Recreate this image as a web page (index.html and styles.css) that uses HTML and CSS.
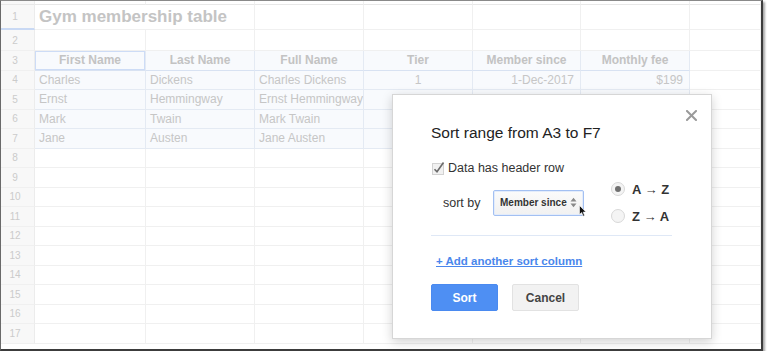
FILE: index.html
```html
<!DOCTYPE html>
<html>
<head>
<meta charset="utf-8">
<link rel="stylesheet" href="styles.css">
</head>
<body>
<div class="frame">
  <div class="sheet">
    <div class="c rh top"></div><div class="c top"></div><div class="c top"></div><div class="c top"></div><div class="c top"></div><div class="c top"></div><div class="c top"></div><div class="c top"></div>

    <div class="c rh rh1">1</div><div class="c title">Gym membership table</div><div class="c"></div><div class="c"></div><div class="c"></div><div class="c"></div><div class="c"></div>

    <div class="c rh">2</div><div class="c"></div><div class="c"></div><div class="c"></div><div class="c"></div><div class="c"></div><div class="c"></div><div class="c"></div>

    <div class="c rh">3</div><div class="c t h sel">First Name</div><div class="c t h">Last Name</div><div class="c t h">Full Name</div><div class="c t h">Tier</div><div class="c t h">Member since</div><div class="c t h">Monthly fee</div><div class="c"></div>

    <div class="c rh">4</div><div class="c t">Charles</div><div class="c t">Dickens</div><div class="c t">Charles Dickens</div><div class="c t ctr">1</div><div class="c t rt">1-Dec-2017</div><div class="c t rt">$199</div><div class="c"></div>

    <div class="c rh">5</div><div class="c t">Ernst</div><div class="c t">Hemmingway</div><div class="c t">Ernst Hemmingway</div><div class="c t"></div><div class="c t"></div><div class="c t"></div><div class="c"></div>

    <div class="c rh">6</div><div class="c t">Mark</div><div class="c t">Twain</div><div class="c t">Mark Twain</div><div class="c t"></div><div class="c t"></div><div class="c t"></div><div class="c"></div>

    <div class="c rh">7</div><div class="c t">Jane</div><div class="c t">Austen</div><div class="c t">Jane Austen</div><div class="c t"></div><div class="c t"></div><div class="c t"></div><div class="c"></div>

    <div class="c rh">8</div><div class="c"></div><div class="c"></div><div class="c"></div><div class="c"></div><div class="c"></div><div class="c"></div><div class="c"></div>
    <div class="c rh">9</div><div class="c"></div><div class="c"></div><div class="c"></div><div class="c"></div><div class="c"></div><div class="c"></div><div class="c"></div>
    <div class="c rh">10</div><div class="c"></div><div class="c"></div><div class="c"></div><div class="c"></div><div class="c"></div><div class="c"></div><div class="c"></div>
    <div class="c rh">11</div><div class="c"></div><div class="c"></div><div class="c"></div><div class="c"></div><div class="c"></div><div class="c"></div><div class="c"></div>
    <div class="c rh">12</div><div class="c"></div><div class="c"></div><div class="c"></div><div class="c"></div><div class="c"></div><div class="c"></div><div class="c"></div>
    <div class="c rh">13</div><div class="c"></div><div class="c"></div><div class="c"></div><div class="c"></div><div class="c"></div><div class="c"></div><div class="c"></div>
    <div class="c rh">14</div><div class="c"></div><div class="c"></div><div class="c"></div><div class="c"></div><div class="c"></div><div class="c"></div><div class="c"></div>
    <div class="c rh">15</div><div class="c"></div><div class="c"></div><div class="c"></div><div class="c"></div><div class="c"></div><div class="c"></div><div class="c"></div>
    <div class="c rh">16</div><div class="c"></div><div class="c"></div><div class="c"></div><div class="c"></div><div class="c"></div><div class="c"></div><div class="c"></div>
    <div class="c rh">17</div><div class="c"></div><div class="c"></div><div class="c"></div><div class="c"></div><div class="c"></div><div class="c"></div><div class="c"></div>
  </div>

  <div class="dialog">
    <svg class="close" width="11" height="11" viewBox="0 0 11 11"><path d="M1 1L10 10M10 1L1 10" stroke="#9a9a9a" stroke-width="2" stroke-linecap="square"/></svg>
    <div class="dtitle">Sort range from A3 to F7</div>
    <div class="checkrow">
      <svg class="cbox" width="15" height="14" viewBox="0 0 15 14"><rect x="1.5" y="2.5" width="11" height="11" fill="#f1f1f1" stroke="#d2d2d2"/><path d="M3.5 8.2L6 10.8L12.5 1.5" fill="none" stroke="#6a6a6a" stroke-width="1.6"/></svg>
      <span>Data has header row</span>
    </div>
    <div class="sortrow">
      <span class="sortby">sort by</span>
      <div class="select">
        <span>Member since</span>
        <svg class="arrows" width="7" height="11" viewBox="0 0 7 11"><path d="M0.5 4.5L3.5 0.8L6.5 4.5Z M0.5 6.5L3.5 10.2L6.5 6.5Z" fill="#8a8a8a"/></svg>
      </div>
      <div class="radios">
        <div class="radio"><span class="dot on"></span><span>A → Z</span></div>
        <div class="radio"><span class="dot"></span><span>Z → A</span></div>
      </div>
    </div>
    <div class="sep"></div>
    <a class="addlink">+ Add another sort column</a>
    <div class="buttons">
      <div class="btn primary">Sort</div>
      <div class="btn">Cancel</div>
    </div>
    <svg class="cursor" width="8" height="12" viewBox="0 0 8 12"><path d="M0.5 0.5L0.5 9.5L2.6 7.6L4.2 11.2L5.6 10.6L4.1 7.1L7 7.1Z" fill="#111" stroke="#fff" stroke-width="0.6"/></svg>
  </div>
</div>
</body>
</html>
```

FILE: styles.css
```css
body {
  margin: 0;
  background: #fff;
  font-family: "Liberation Sans", Arial, sans-serif;
}

.frame {
  position: relative;
  width: 760px;
  height: 348px;
  border-left: 1px solid #6a6a6a;
  border-top: 1px solid #8a8a8a;
  border-right: 2px solid #3c3c3c;
  border-bottom: 2px solid #3c3c3c;
  box-shadow: 2px 2px 2px rgba(0, 0, 0, 0.35);
  overflow: hidden;
}

.sheet {
  display: grid;
  grid-template-columns: 34px 111px 109px 109px 109px 108px 109px 71px;
  grid-template-rows: 4px 25px 21px repeat(15, 19.5px);
}

.c {
  box-sizing: border-box;
  border-right: 1px solid #f0f0f0;
  border-bottom: 1px solid #f0f0f0;
  display: flex;
  align-items: center;
  padding: 0 4px;
  font-size: 12px;
  color: #c6c6c6;
  white-space: nowrap;
  overflow: hidden;
}

.top {
  border-bottom-color: #e8e8e8;
}

.rh {
  background: #f8f8f8;
  justify-content: center;
  padding: 0 5px 0 0;
  font-size: 10px;
  color: #cbcbcb;
  border-right-color: #ececec;
}

.rh1 {
  border-bottom: 2px solid #c9d9f4;
}

.title {
  grid-column: span 2;
  font-size: 17px;
  font-weight: bold;
  color: #c4c4c4;
  overflow: visible;
}

.t {
  background: #f8fafd;
  border-color: #e4eaf3;
}

.h {
  justify-content: center;
  font-weight: bold;
  font-size: 12px;
  color: #c3c3c3;
  border-bottom-color: #d8e2f2;
}

.sel {
  box-shadow: inset 0 0 0 1px #cddcf6;
}

.ctr {
  justify-content: center;
}

.rt {
  justify-content: flex-end;
  padding-right: 6px;
}

/* dialog */
.dialog {
  position: absolute;
  left: 391px;
  top: 93px;
  width: 320px;
  height: 245px;
  box-sizing: border-box;
  background: #fff;
  border: 1px solid #d6d6d6;
  box-shadow: 0 3px 10px rgba(0, 0, 0, 0.18);
  padding: 28px 0 0 38px;
  color: #222;
}

.close {
  position: absolute;
  left: 293px;
  top: 15px;
}

.dtitle {
  font-size: 15.5px;
  line-height: 20px;
  color: #222;
}

.checkrow {
  margin-top: 18px;
  display: flex;
  align-items: center;
  height: 14px;
  font-size: 12.5px;
  color: #333;
}

.cbox {
  margin-right: 2px;
  flex-shrink: 0;
}

.sortrow {
  margin-top: 6px;
  height: 43px;
  display: flex;
  align-items: center;
}

.sortby {
  flex: 0 0 50px;
  margin-left: 12px;
  font-size: 12.5px;
  color: #333;
}

.select {
  flex: 0 0 91px;
  width: 91px;
  height: 26px;
  box-sizing: border-box;
  border: 1px solid #a3c0f2;
  border-radius: 2px;
  background: linear-gradient(#fbfbfb, #f1f1f1);
  box-shadow: inset 0 0 0 1px #e3ecfb;
  display: flex;
  align-items: center;
  justify-content: space-between;
  padding: 0 6px 0 6px;
  font-size: 10px;
  font-weight: bold;
  color: #333;
  white-space: nowrap;
  overflow: hidden;
}

.arrows {
  flex-shrink: 0;
}

.radios {
  margin-left: 27px;
  display: flex;
  flex-direction: column;
  gap: 11px;
}

.radio {
  display: flex;
  align-items: center;
  height: 16px;
  font-size: 13px;
  font-weight: bold;
  color: #333;
  gap: 7px;
  white-space: nowrap;
}

.dot {
  flex: 0 0 14px;
  width: 14px;
  height: 14px;
  box-sizing: border-box;
  border-radius: 50%;
  border: 1px solid #d8d8d8;
  background: #f4f4f4;
  display: flex;
  align-items: center;
  justify-content: center;
}

.dot.on::after {
  content: "";
  width: 6px;
  height: 6px;
  border-radius: 50%;
  background: #707070;
}

.sep {
  margin-top: 11px;
  width: 241px;
  height: 1px;
  background: #dfe8f6;
}

.addlink {
  display: block;
  margin: 18px 0 0 5px;
  font-size: 11.5px;
  line-height: 14px;
  font-weight: bold;
  color: #4a87ec;
  text-decoration: underline;
}

.buttons {
  margin-top: 16px;
  display: flex;
  gap: 14px;
}

.btn {
  width: 67px;
  height: 27px;
  box-sizing: border-box;
  border-radius: 2px;
  background: #f2f2f2;
  border: 1px solid #e2e2e2;
  display: flex;
  align-items: center;
  justify-content: center;
  font-size: 12px;
  font-weight: bold;
  color: #444;
}

.btn.primary {
  background: #4e8ff3;
  border-color: #4a8af0;
  color: #fff;
}

.cursor {
  position: absolute;
  left: 186px;
  top: 110px;
}
```
